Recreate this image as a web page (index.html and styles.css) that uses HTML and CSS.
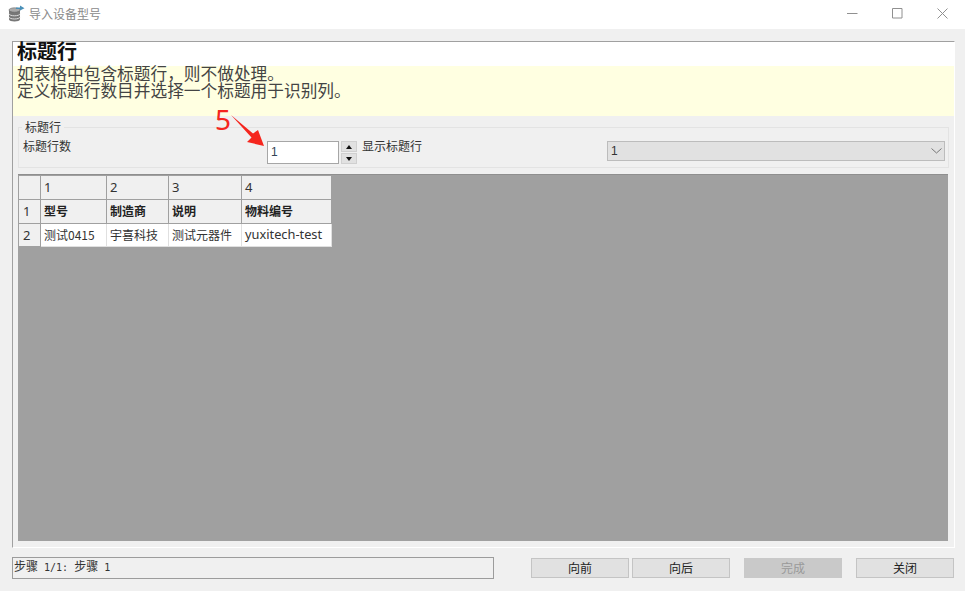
FILE: index.html
```html
<!DOCTYPE html>
<html lang="zh">
<head>
<meta charset="utf-8">
<title>导入设备型号</title>
<link rel="stylesheet" href="styles.css">
</head>
<body>
<div class="window">
  <header class="titlebar">
    <svg class="app-icon" width="17" height="17" viewBox="0 0 17 17">
      <path d="M1 5.500v9c0 1.200 2.700 2 5.500 2s5.500-.8 5.500-2v-9z" fill="#777"/>
      <ellipse cx="6.500" cy="5" rx="5.500" ry="2.200" fill="#aaa" stroke="#666" stroke-width=".6"/>
      <path d="M1 8.800c0 1.200 2.700 2 5.500 2s5.500-.8 5.500-2M1 12c0 1.200 2.700 2 5.500 2s5.500-.8 5.500-2" fill="none" stroke="#ddd" stroke-width="1"/>
      <path d="M8 2.500h4V.5l4.500 2.800L12 5.500v-1.500H8z" fill="#4a90b8"/>
    </svg>
    <span class="title-text">导入设备型号</span>
    <div class="controls">
      <svg width="11" height="11" viewBox="0 0 11 11"><path d="M0 5.500h10.500" stroke="#909090" fill="none"/></svg>
      <svg width="11" height="11" viewBox="0 0 11 11"><path d="M.5.500h9.500v9.500h-9.500z" stroke="#909090" fill="none"/></svg>
      <svg width="11" height="11" viewBox="0 0 11 11"><path d="M.5.500l10 10M10.500.500l-10 10" stroke="#909090" fill="none"/></svg>
    </div>
  </header>

  <main class="content">
    <section class="panel">
      <div class="panel-head">标题行</div>
      <div class="note">
        <p>如表格中包含标题行，则不做处理。</p>
        <p>定义标题行数目并选择一个标题用于识别列。</p>
      </div>
      <div class="panel-body">
        <div class="group">
          <span class="legend">标题行</span>
          <span class="row-label">标题行数</span>
          <span class="spin-input">1</span>
          <span class="spin-buttons">
            <span class="spin-btn"><i class="tri-up"></i></span>
            <span class="spin-btn"><i class="tri-down"></i></span>
          </span>
          <span class="show-label">显示标题行</span>
          <span class="select">
            <span>1</span>
            <svg width="11" height="6" viewBox="0 0 11 6"><path d="M.5.500l5 4.500 5-4.500" fill="none" stroke="#777"/></svg>
          </span>
        </div>
        <div class="sheet">
          <div class="table">
            <div class="cell head"></div>
            <div class="cell head num">1</div>
            <div class="cell head num">2</div>
            <div class="cell head num">3</div>
            <div class="cell head num">4</div>
            <div class="cell head num side">1</div>
            <div class="cell head strong">型号</div>
            <div class="cell head strong">制造商</div>
            <div class="cell head strong">说明</div>
            <div class="cell head strong">物料编号</div>
            <div class="cell head num side">2</div>
            <div class="cell">测试0415</div>
            <div class="cell">宇喜科技</div>
            <div class="cell">测试元器件</div>
            <div class="cell latin">yuxitech-test</div>
          </div>
        </div>
      </div>
    </section>

    <footer class="footer">
      <div class="status"><span class="status-cjk">步骤</span> 1/1: <span class="status-cjk">步骤</span> 1</div>
      <div class="buttons">
        <span class="btn">向前</span>
        <span class="btn btn-next">向后</span>
        <span class="btn btn-disabled">完成</span>
        <span class="btn">关闭</span>
      </div>
    </footer>
  </main>

  <span class="callout-number">5</span>
  <svg class="callout-arrow" width="40" height="40" viewBox="0 0 40 40">
    <path d="M1 1L23 19.500 28 16 34 32 17 28 21.500 23.500z" fill="#f5261e"/>
  </svg>
</div>
</body>
</html>
```
FILE: styles.css
```css
* { box-sizing: border-box; }
html, body { margin: 0; padding: 0; }
body {
  width: 965px;
  height: 591px;
  overflow: hidden;
  font-family: "Noto Sans CJK SC", "Liberation Sans", sans-serif;
  color: #222;
  background: #f0f0f0;
}
p { margin: 0; }

.window {
  position: relative;
  display: flex;
  flex-direction: column;
  width: 965px;
  height: 591px;
}

.titlebar {
  display: flex;
  align-items: flex-start;
  flex: 0 0 29px;
  padding: 5px 0 0 8px;
  background: #fff;
}
.app-icon { flex: none; }
.title-text { margin-left: 4px; font-size: 12px; line-height: 18px; color: #8a8a8a; }
.controls {
  display: flex;
  gap: 34px;
  margin-left: auto;
  padding: 3px 17px 0 0;
}

.content {
  flex: 1;
  display: flex;
  flex-direction: column;
  padding: 12px 10px 0 12px;
}

.panel {
  display: flex;
  flex-direction: column;
  flex: 0 0 507px;
  border-top: 1px solid #a0a0a0;
  border-left: 1px solid #a0a0a0;
  border-right: 1px solid #fff;
  border-bottom: 1px solid #fff;
}
.panel-head {
  flex: 0 0 24px;
  padding-left: 4px;
  background: #fff;
  color: #111;
  font-size: 20px;
  font-weight: 700;
  line-height: 18px;
  white-space: nowrap;
}
.note {
  flex: 0 0 50px;
  padding-left: 4px;
  background: #ffffe1;
  color: #444;
  font-size: 16.700px;
  line-height: 17px;
}
.note p:first-child { margin-top: -1px; }
.panel-body {
  flex: 1;
  display: flex;
  flex-direction: column;
  padding: 11px 5px 5px 5px;
  background: #f0f0f0;
}

.group {
  position: relative;
  display: flex;
  align-items: flex-start;
  flex: 0 0 41px;
  padding: 13px 0 0 4px;
  border: 1px solid #e3e3e3;
  font-size: 12px;
  line-height: 13px;
  color: #333;
}
.legend {
  position: absolute;
  top: -8px;
  left: 3px;
  padding: 0 3px;
  background: #f0f0f0;
  line-height: 14px;
}
.row-label { flex: 0 0 244px; margin-top: -2px; line-height: 14px; }
.spin-input {
  flex: 0 0 72px;
  height: 23px;
  padding-left: 3px;
  border: 1px solid #a6a6a6;
  background: #fff;
  font-family: "Liberation Sans", sans-serif;
  line-height: 20px;
  color: #345;
}
.spin-buttons {
  display: flex;
  flex-direction: column;
  gap: 1px;
  flex: 0 0 16px;
  margin-left: 2px;
}
.spin-btn {
  display: flex;
  align-items: center;
  justify-content: center;
  height: 11px;
  background: #e1e1e1;
  border: 1px solid #d0d0d0;
}
.tri-up, .tri-down { width: 0; height: 0; border-left: 3.500px solid transparent; border-right: 3.500px solid transparent; }
.tri-up { border-bottom: 4px solid #111; }
.tri-down { border-top: 4px solid #111; }
.show-label { flex: 0 0 245px; margin-left: 5px; margin-top: -2px; line-height: 14px; }
.select {
  display: flex;
  align-items: center;
  justify-content: space-between;
  flex: 0 0 338px;
  height: 20px;
  padding: 0 2px 0 3px;
  background: #e1e1e1;
  border: 1px solid #bcbcbc;
  font-family: "Liberation Sans", sans-serif;
  color: #333;
}

.sheet {
  flex: 0 0 367px;
  margin: 6px 1px 0 0;
  padding: 1px 0 0 1px;
  background: #a0a0a0;
  border-top: 1px solid #8f8f8f;
}
.table {
  display: grid;
  grid-template-columns: 22px 66px 62px 73px 90px;
  grid-template-rows: 24px 24px 23px;
  width: 313px;
}
.cell {
  display: flex;
  align-items: center;
  padding: 0 0 2px 3px;
  background: #fff;
  border-right: 1px solid #e0e0e0;
  border-bottom: 1px solid #e0e0e0;
  font-size: 12px;
  color: #333;
  white-space: nowrap;
}
.head {
  background: #f0f0f0;
  border-right-color: #a0a0a0;
  border-bottom-color: #a0a0a0;
}
.num {
  padding: 0 0 1px 3px;
  font-family: "Noto Sans", sans-serif;
  font-size: 13px;
  color: #333;
}
.side { padding-left: 4px; }
.strong { font-weight: 700; color: #222; }
.latin { font-family: "Noto Sans", sans-serif; font-size: 12.800px; }

.footer {
  display: flex;
  align-items: flex-start;
  justify-content: space-between;
  padding: 9px 1px 0 0;
}
.status {
  flex: 0 0 482px;
  height: 22px;
  padding: 0 1px;
  border: 1px solid #9c9c9c;
  font-family: "DejaVu Sans Mono", monospace;
  font-size: 10px;
  line-height: 15px;
  color: #333;
}
.status-cjk { font-family: "Noto Sans CJK SC", sans-serif; font-size: 12px; }
.buttons {
  display: flex;
  gap: 3px;
  padding-top: 1px;
}
.btn {
  display: flex;
  align-items: center;
  justify-content: center;
  width: 98px;
  height: 20px;
  padding-bottom: 2px;
  background: #e1e1e1;
  border: 1px solid #c4c4c4;
  font-size: 12px;
  color: #222;
}
.btn-disabled {
  margin-left: 11px;
  margin-right: 11px;
  background: #c9c9c9;
  border-color: #c9c9c9;
  color: #999;
}

.callout-number {
  position: absolute;
  top: 105px;
  left: 215px;
  font-family: "Noto Sans", sans-serif;
  font-size: 28px;
  font-weight: 400;
  line-height: 28px;
  color: #f5261e;
}
.callout-arrow {
  position: absolute;
  top: 114px;
  left: 230px;
}
```
